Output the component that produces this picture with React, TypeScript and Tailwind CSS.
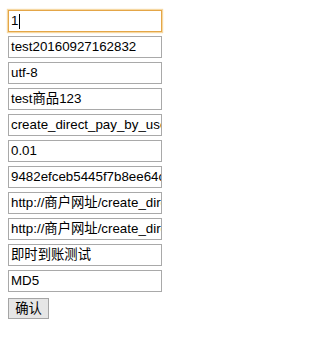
import React from 'react';

const fields = [
  '1',
  'test20160927162832',
  'utf-8',
  'test商品123',
  'create_direct_pay_by_user',
  '0.01',
  '9482efceb5445f7b8ee64c9c1f2a7b3d',
  'http://商户网址/create_direct_pay_by_user-JAVA-UTF-8/return_url.jsp',
  'http://商户网址/create_direct_pay_by_user-JAVA-UTF-8/notify_url.jsp',
  '即时到账测试',
  'MD5',
];

export default function App() {
  return (
    <div className="min-h-[355px] bg-white px-2 pt-[10px] text-black" style={{ fontFamily: '"Liberation Sans", "Noto Sans CJK SC", sans-serif' }}>
      <div className="flex flex-col gap-1">
        {fields.map((v, i) => (
          <div
            key={i}
            className={
              i === 0
                ? 'w-[154px] h-[22px] border border-[#e4a647] shadow-[0_0_1px_1px_rgba(240,190,100,0.6)] pl-[2px] flex items-center overflow-hidden whitespace-nowrap text-[13.33px]'
                : 'w-[154px] h-[22px] border border-[#a9a9a9] pl-[2px] flex items-center overflow-hidden whitespace-nowrap text-[13.33px]'
            }
          >
            {v}
            {i === 0 && <span className="ml-[1px] inline-block w-px h-[15px] bg-black" />}
          </div>
        ))}
        <div>
          <button className="w-[41px] h-[21px] border border-[#a5a5a5] bg-[#e6e6e6] text-[13.33px] leading-none">确认</button>
        </div>
      </div>
    </div>
  );
}
